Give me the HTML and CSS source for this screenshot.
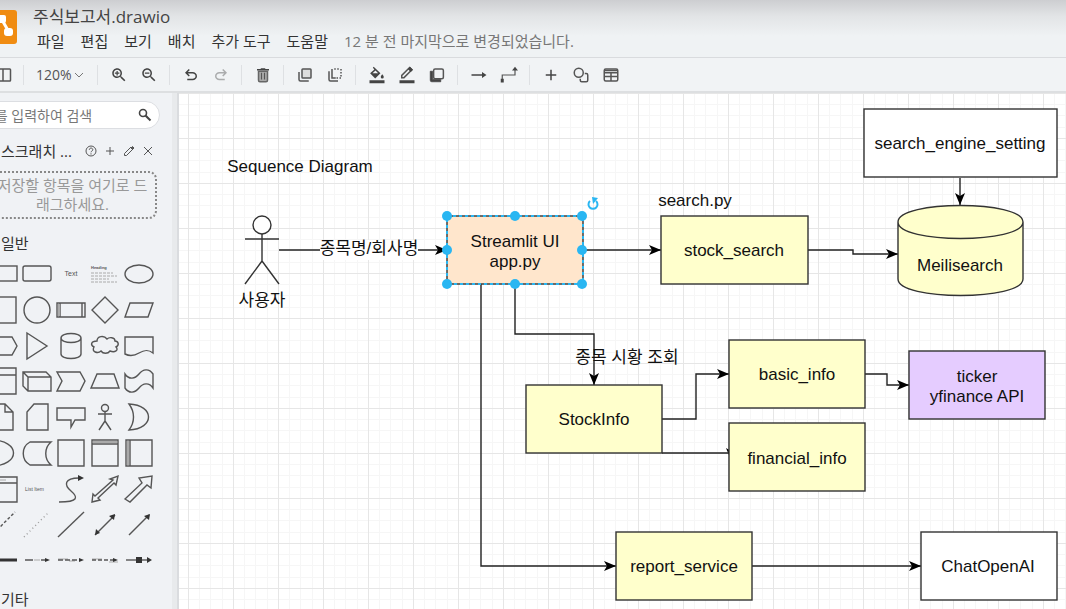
FILE: index.html
```html
<!DOCTYPE html>
<html lang="ko">
<head>
<meta charset="UTF-8">
<meta name="viewport" content="width=device-width, initial-scale=1.0">
<title>주식보고서.drawio</title>
<link rel="stylesheet" href="styles.css">
</head>
<body>
<div class="app">
  <header class="header">
    <a class="logo" href="#" aria-label="draw.io">
      <svg viewBox="0 0 34 34">
        <rect width="34" height="34" rx="3" fill="#f08c12"/>
        <path d="M17 10 L9 22 M19 10 L26 22" stroke="#fff" stroke-width="3"/>
        <rect x="11" y="5" width="12" height="8" rx="2" fill="#fff"/>
        <rect x="4" y="18" width="9" height="8" rx="2" fill="#fff"/>
        <rect x="21" y="18" width="9" height="8" rx="3" fill="#fff"/>
      </svg>
    </a>
    <div class="header-main">
      <h1 class="title">주식보고서.drawio</h1>
      <nav class="menu">
        <a href="#">파일</a>
        <a href="#">편집</a>
        <a href="#">보기</a>
        <a href="#">배치</a>
        <a href="#">추가 도구</a>
        <a href="#">도움말</a>
        <span class="status">12 분 전 마지막으로 변경되었습니다.</span>
      </nav>
    </div>
  </header>

  <div class="toolbar">
    <button aria-label="Sidebar"><svg viewBox="0 0 24 24"><g class="line"><rect x="4" y="4" width="18" height="16" rx="1"/><path d="M12 4v16"/></g></svg></button>
    <span class="sep"></span>
    <div class="zoom">
      <select aria-label="Zoom"><option>120%</option><option>100%</option></select>
      <svg viewBox="0 0 10 10"><path d="M1 3l4 4 4-4" fill="none" stroke="#777"/></svg>
    </div>
    <span class="sep"></span>
    <button aria-label="Zoom in"><svg viewBox="0 0 24 24"><path d="M15.500 14h-.79l-.28-.27C15.410 12.590 16 11.110 16 9.500 16 5.910 13.090 3 9.500 3S3 5.910 3 9.500 5.910 16 9.500 16c1.610 0 3.090-.59 4.230-1.570l.27.28v.79l5 4.990L20.490 19zM9.500 14C7.010 14 5 11.990 5 9.500S7.010 5 9.500 5 14 7.010 14 9.500 11.990 14 9.500 14zM6.500 8.700h2.200V6.500h1.600v2.200h2.200v1.600h-2.200v2.200H8.700v-2.200H6.500z"/></svg></button>
    <button aria-label="Zoom out"><svg viewBox="0 0 24 24"><path d="M15.500 14h-.79l-.28-.27C15.410 12.590 16 11.110 16 9.500 16 5.910 13.090 3 9.500 3S3 5.910 3 9.500 5.910 16 9.500 16c1.610 0 3.090-.59 4.230-1.570l.27.28v.79l5 4.990L20.490 19zM9.500 14C7.010 14 5 11.990 5 9.500S7.010 5 9.500 5 14 7.010 14 9.500 11.990 14 9.500 14zM6.500 8.700h6v1.600h-6z"/></svg></button>
    <span class="sep"></span>
    <button aria-label="Undo"><svg viewBox="0 0 24 24"><path d="M7 19v-2h7.100q1.575 0 2.737-1Q18 15 18 13.500T16.837 11Q15.675 10 14.100 10H7.800l2.600 2.600L9 14 4 9l5-5 1.400 1.400L7.800 8h6.300q2.425 0 4.163 1.575Q20 11.150 20 13.500t-1.737 3.925Q16.525 19 14.100 19z"/></svg></button>
    <button aria-label="Redo" disabled><svg viewBox="0 0 24 24"><path transform="matrix(-1 0 0 1 24 0)" d="M7 19v-2h7.100q1.575 0 2.737-1Q18 15 18 13.500T16.837 11Q15.675 10 14.100 10H7.800l2.600 2.600L9 14 4 9l5-5 1.400 1.400L7.800 8h6.300q2.425 0 4.163 1.575Q20 11.150 20 13.500t-1.737 3.925Q16.525 19 14.100 19z"/></svg></button>
    <span class="sep"></span>
    <button aria-label="Delete"><svg viewBox="0 0 24 24"><path d="M9 3h6v1h5v2H4V4h5z"/><path d="M6 7h12v12a2 2 0 0 1-2 2H8a2 2 0 0 1-2-2z" fill="#aaa" stroke="#666" stroke-width="2"/><path d="M10 9v9M14 9v9" stroke="#555" stroke-width="1.500"/></svg></button>
    <span class="sep"></span>
    <button aria-label="To front"><svg viewBox="0 0 24 24"><g class="line"><path d="M4 8v10a2 2 0 0 0 2 2h11"/><rect x="8" y="4" width="12" height="12" rx="1" fill="#ddd"/></g></svg></button>
    <button aria-label="To back"><svg viewBox="0 0 24 24"><g class="line"><path d="M4 7v11a2 2 0 0 0 2 2h10M8 4v12h5"/><path d="M11 4h8M20 4v12h-7" stroke-dasharray="2 2"/></g></svg></button>
    <span class="sep"></span>
    <button aria-label="Fill color"><svg viewBox="0 0 24 24"><path d="M7.600 1l9 8.700-7 6.800-6.800-6.800 5.700-5.200L6.500 2.300zM6 9.500h7.500L10 6z" fill-rule="evenodd"/><path d="M19 11s-2 2.200-2 3.500a2 2 0 0 0 4 0C21 13.200 19 11 19 11zM2 19h20v4H2z"/></svg></button>
    <button aria-label="Line color"><svg viewBox="0 0 24 24"><path d="M5 15.500v-3L15.500 2l3 3L8 15.500z" class="line"/><path d="M13 4l3-3 4 4-3 3zM2 19h20v4H2z"/></svg></button>
    <button aria-label="Shadow"><svg viewBox="0 0 24 24"><path d="M6 7v11h11v3H5a2 2 0 0 1-2-2V7z" stroke="#444"/><rect x="7.500" y="4" width="13" height="13" rx="2" class="line"/></svg></button>
    <span class="sep"></span>
    <button aria-label="Connection"><svg viewBox="0 0 24 24"><path d="M2 11h14V8l6 4-6 4v-3H2z"/></svg></button>
    <button aria-label="Waypoints"><svg viewBox="0 0 24 24"><path d="M3 19v-7h17V4" fill="none" stroke="#555" stroke-width="1.600"/><path d="M1 17h4v5H1zM16 6l4-5 4 5z"/></svg></button>
    <span class="sep"></span>
    <button aria-label="Insert"><svg viewBox="0 0 24 24"><path d="M11 5h2v6h6v2h-6v6h-2v-6H5v-2h6z"/></svg></button>
    <button aria-label="Shapes"><svg viewBox="0 0 24 24"><g class="line"><circle cx="9" cy="9" r="6"/><path d="M17 10h2a2 2 0 0 1 2 2v7a2 2 0 0 1-2 2h-6a2 2 0 0 1-2-2v-2"/></g></svg></button>
    <button aria-label="Table"><svg viewBox="0 0 24 24"><g class="line"><rect x="3" y="4" width="18" height="16" rx="2"/><path d="M3 9h18M3 14h18M12 9v11M4 6h16"/></g></svg></button>
  </div>

  <div class="workspace">
    <aside class="sidebar">
      <div class="search">
        <input type="text" aria-label="검색" placeholder="단어를 입력하여 검색">
        <button aria-label="검색"><svg viewBox="0 0 14 14"><circle cx="5" cy="5" r="3.500" fill="none" stroke="#444" stroke-width="1.600"/><path d="M7.500 7.500L12.500 12.500" stroke="#444" stroke-width="2"/></svg></button>
      </div>
      <div class="scratch-head">
        <h2>스크래치 ...</h2>
        <button aria-label="도움말"><svg viewBox="0 0 14 14"><circle cx="7" cy="7" r="5"/><path d="M5.300 5.800c0-2.300 3.500-2.300 3.500 0C8.800 7 7 7 7 8.300M7 9.300v1.200"/></svg></button>
        <button aria-label="추가"><svg viewBox="0 0 14 14"><path d="M7 3v8M3 7h8"/></svg></button>
        <button aria-label="편집"><svg viewBox="0 0 14 14"><path d="M2.500 11.500V9.500L9 3l2 2-6.500 6.500z"/><path d="M9 4l1.500-1.500 1.500 1.500L10.500 5.500z" fill="#555"/></svg></button>
        <button aria-label="닫기"><svg viewBox="0 0 14 14"><path d="M3 3l8 8M11 3l-8 8"/></svg></button>
      </div>
      <p class="dropzone">저장할 항목을 여기로 드래그하세요.</p>
      <h2 class="section">일반</h2>
      <div class="palette">
        <button aria-label="Rectangle"><svg viewBox="0 0 34 36"><rect x="3" y="11" width="28" height="15"/></svg></button>
        <button aria-label="Rounded rectangle"><svg viewBox="0 0 34 36"><rect x="3" y="11" width="28" height="15" rx="2"/></svg></button>
        <button aria-label="Text"><svg viewBox="0 0 34 36"><text x="17" y="21" text-anchor="middle" font-size="7">Text</text></svg></button>
        <button aria-label="Text box"><svg viewBox="0 0 34 36"><text x="3" y="14" class="bold" font-size="4">Heading</text><path class="soft" stroke-dasharray="3 1" d="M3 18h22M3 21h26M3 24h18M3 27h26"/></svg></button>
        <button aria-label="Ellipse"><svg viewBox="0 0 34 36"><ellipse cx="17" cy="19" rx="14" ry="9"/></svg></button>

        <button aria-label="Square"><svg viewBox="0 0 34 36"><rect x="4" y="6" width="26" height="26"/></svg></button>
        <button aria-label="Circle"><svg viewBox="0 0 34 36"><circle cx="17" cy="19" r="13"/></svg></button>
        <button aria-label="Process"><svg viewBox="0 0 34 36"><path d="M3 12h28v14H3zM6 12v14M28 12v14"/><path class="shade" d="M4 13h2v12H4z"/></svg></button>
        <button aria-label="Diamond"><svg viewBox="0 0 34 36"><path d="M17 6l13 13-13 13L4 19z"/></svg></button>
        <button aria-label="Parallelogram"><svg viewBox="0 0 34 36"><path d="M8 12h23l-5 14H3z"/></svg></button>

        <button aria-label="Hexagon"><svg viewBox="0 0 34 36"><path d="M8 10h18l5 9-5 9H8l-5-9z"/></svg></button>
        <button aria-label="Triangle"><svg viewBox="0 0 34 36"><path d="M7 6l20 13L7 32z"/></svg></button>
        <button aria-label="Cylinder"><svg viewBox="0 0 34 36"><path d="M7 11v16c0 6 20 6 20 0V11c0-6-20-6-20 0c0 6 20 6 20 0"/></svg></button>
        <button aria-label="Cloud"><svg viewBox="0 0 34 36"><path d="M9 14c-6 0-7 4-3 6-3 5 4 7 7 4 2 3 7 3 9 0 5 2 9-1 6-4 4-2 2-6-1-6 0-4-6-4-8-2-3-4-10-3-10 2z"/></svg></button>
        <button aria-label="Document"><svg viewBox="0 0 34 36"><path d="M3 10h28v16c-5-4-9-3-14 0s-10 3-14 1z"/></svg></button>

        <button aria-label="Internal storage"><svg viewBox="0 0 34 36"><path d="M4 5h26v26H4zM4 12h26"/></svg></button>
        <button aria-label="Cube"><svg viewBox="0 0 34 36"><path d="M3 9h23l5 5v14H8l-5-5zM3 9l5 5h23M8 14v14"/></svg></button>
        <button aria-label="Step"><svg viewBox="0 0 34 36"><path d="M3 9h23l5 9-5 10H3l5-10z"/></svg></button>
        <button aria-label="Trapezoid"><svg viewBox="0 0 34 36"><path d="M9 11h17l5 14H3z"/></svg></button>
        <button aria-label="Tape"><svg viewBox="0 0 34 36"><path d="M3 11c4 6 10 5 14 0 4-5 10-6 14 0v14c-4-6-10-5-14 0-4 5-10 6-14 0z"/></svg></button>

        <button aria-label="Note"><svg viewBox="0 0 34 36"><path d="M7 5h12l8 8v18H7zM19 5v8h8"/></svg></button>
        <button aria-label="Card"><svg viewBox="0 0 34 36"><path d="M14 5h14v26H7V13z"/></svg></button>
        <button aria-label="Callout"><svg viewBox="0 0 34 36"><path d="M3 9h28v12H21l-4 7v-7H3z"/></svg></button>
        <button aria-label="Actor"><svg viewBox="0 0 34 36"><circle cx="17" cy="9" r="3.500"/><path d="M17 12v10M10 15h14M17 22l-6 9M17 22l6 9"/></svg></button>
        <button aria-label="Or"><svg viewBox="0 0 34 36"><path d="M7 5c26 1 26 25 0 26 6-8 6-18 0-26z"/></svg></button>

        <button aria-label="And"><svg viewBox="0 0 34 36"><path d="M5 5c30 0 30 26 0 26z"/></svg></button>
        <button aria-label="Data storage"><svg viewBox="0 0 34 36"><path d="M10 7h21c-7 6-7 17 0 23H10C1 25 1 12 10 7z"/></svg></button>
        <button aria-label="Container"><svg viewBox="0 0 34 36"><path d="M4 5h26v26H4z"/></svg></button>
        <button aria-label="Vertical container"><svg viewBox="0 0 34 36"><path d="M4 5h26v26H4zM4 9h26"/><path class="shade" d="M5 6h24v2H5z"/></svg></button>
        <button aria-label="Horizontal container"><svg viewBox="0 0 34 36"><path d="M4 5h26v26H4zM8 5v26"/><path class="shade" d="M5 6h2v24H5z"/></svg></button>

        <button aria-label="List"><svg viewBox="0 0 34 36"><path d="M3 6h28v25H3zM3 12h28"/><path class="soft" d="M12 9h8"/></svg></button>
        <button aria-label="List item"><svg viewBox="0 0 34 36"><text x="5" y="20" font-size="5">List Item</text></svg></button>
        <button aria-label="Curve"><svg viewBox="0 0 34 36"><path d="M5 31c20 0 19-5 12-11s-7-13 8-13"/><path class="solid" d="M24 4l6 3-6 3z"/></svg></button>
        <button aria-label="Bidirectional arrow"><svg viewBox="0 0 34 36"><path d="M4 31l1-8 2 2L25 9l-3-1 8-3-2 9-2-2L10 27l2 2z"/></svg></button>
        <button aria-label="Arrow"><svg viewBox="0 0 34 36"><path d="M3 28l17-16-3-5 13-2-1 12-4-3L8 31z"/></svg></button>

        <button aria-label="Dashed line"><svg viewBox="0 0 34 36"><path stroke-dasharray="3 2" d="M4 30L29 5"/></svg></button>
        <button aria-label="Dotted line"><svg viewBox="0 0 34 36"><path class="dots" d="M4 30L29 5"/></svg></button>
        <button aria-label="Line"><svg viewBox="0 0 34 36"><path d="M4 30L30 5"/></svg></button>
        <button aria-label="Bidirectional connector"><svg viewBox="0 0 34 36"><path d="M7 28L27 8"/><path class="solid" d="M7 28l1-6 4 4zM27 7l-1 6-5-4z"/></svg></button>
        <button aria-label="Directional connector"><svg viewBox="0 0 34 36"><path d="M7 28L27 8"/><path class="solid" d="M28 7l-1 6-5-4z"/></svg></button>

        <button aria-label="Link"><svg viewBox="0 0 34 36"><path class="thick" d="M4 17h27"/></svg></button>
        <button aria-label="Connector with label"><svg viewBox="0 0 34 36"><path d="M5 17h8M21 17h5"/><path class="soft" d="M14 17h6"/><path class="solid" d="M25 15l5 2-5 2z"/></svg></button>
        <button aria-label="Connector with 2 labels"><svg viewBox="0 0 34 36"><path class="soft" d="M4 16h10M15 18h6"/><path d="M4 17h23"  stroke-dasharray="5 2"/><path class="solid" d="M25 15l5 2-5 2z"/></svg></button>
        <button aria-label="Connector with 3 labels"><svg viewBox="0 0 34 36"><path class="soft" d="M4 16h10M21 19h9"/><path d="M4 17h23" stroke-dasharray="4 2"/><path class="solid" d="M25 15l5 2-5 2z"/></svg></button>
        <button aria-label="Connector with symbol"><svg viewBox="0 0 34 36"><path d="M4 17h23"/><path class="solid" d="M14 14h6v6h-6zM25 14l5 3-5 3z"/></svg></button>
      </div>
      <h2 class="section">기타</h2>
    </aside>

    <main class="canvas">
      <svg class="diagram">
        <defs>
          <pattern id="grid" x="188" y="138" width="45" height="45" patternUnits="userSpaceOnUse">
            <path class="minor" d="M11.500 0v45M22.500 0v45M34.500 0v45M0 11.500h45M0 22.500h45M0 34.500h45"/>
            <path class="major" d="M.5 0v45M0 .5h45"/>
          </pattern>
          <marker id="arrow" viewBox="0 0 12 10" refX="12" refY="5" markerWidth="12" markerHeight="10" markerUnits="userSpaceOnUse" orient="auto">
            <path d="M12 5L0 0l3 5-3 5z"/>
          </marker>
        </defs>
        <!-- scrolled view of the page -->
        <g transform="translate(-179 -93)">
          <rect class="page" x="179" y="93" width="100%" height="100%"/>

          <g class="edges">
            <path d="M279 250H447"/>
            <path d="M583 250H661"/>
            <path d="M808 250H853V254H898"/>
            <path d="M960 178V205"/>
            <path d="M481 284V566H616"/>
            <path d="M515 284V334H594V385"/>
            <path d="M662 419H696V374H729"/>
            <path d="M662 453H731V460"/>
            <path d="M865 374H887V385H909"/>
            <path d="M752 566H921"/>
          </g>

          <g class="actor">
            <circle cx="262" cy="225" r="9"/>
            <path d="M262 234V261M245 239H279M262 261L245 284M262 261L279 284"/>
          </g>

          <g class="nodes">
            <rect class="orange" x="447" y="216" width="136" height="68"/>
            <rect class="yellow" x="661" y="216" width="147" height="68"/>
            <rect class="white" x="864" y="109" width="193" height="68"/>
            <path class="yellow" d="M898 222V279C898 301 1023 301 1023 279V222C1023 200 898 200 898 222C898 244 1023 244 1023 222"/>
            <rect class="yellow" x="526" y="385" width="136" height="68"/>
            <rect class="yellow" x="729" y="340" width="136" height="68"/>
            <rect class="yellow" x="729" y="423" width="136" height="68"/>
            <rect class="purple" x="909" y="351" width="136" height="68"/>
            <rect class="yellow" x="616" y="532" width="136" height="68"/>
            <rect class="white" x="921" y="532" width="136" height="68"/>
          </g>

          <rect class="label-bg" x="320" y="240" width="98" height="20"/>
          <g class="labels">
            <text x="300" y="172">Sequence Diagram</text>
            <text x="262" y="306">사용자</text>
            <text x="369" y="254">종목명/회사명</text>
            <text x="515" y="247">Streamlit UI</text>
            <text x="515" y="267">app.py</text>
            <text x="695" y="206">search.py</text>
            <text x="734" y="256">stock_search</text>
            <text x="960" y="149">search_engine_setting</text>
            <text x="960" y="271">Meilisearch</text>
            <text x="627" y="363">종목 시황 조회</text>
            <text x="594" y="425">StockInfo</text>
            <text x="797" y="380">basic_info</text>
            <text x="797" y="464">financial_info</text>
            <text x="977" y="382">ticker</text>
            <text x="977" y="402">yfinance API</text>
            <text x="684" y="572">report_service</text>
            <text x="988" y="572">ChatOpenAI</text>
          </g>

          <g class="selection">
            <rect x="447" y="216" width="136" height="68"/>
            <circle cx="447" cy="216" r="5"/>
            <circle cx="515" cy="216" r="5"/>
            <circle cx="582" cy="216" r="5"/>
            <circle cx="447" cy="250" r="5"/>
            <circle cx="582" cy="250" r="5"/>
            <circle cx="447" cy="284" r="5"/>
            <circle cx="515" cy="284" r="5"/>
            <circle cx="582" cy="284" r="5"/>
            <path class="rotate" d="M590 201a4.500 4.500 0 1 0 6 0"/>
            <path class="rotate-tip" d="M592 197l6 1-5 6z"/>
          </g>
        </g>
      </svg>
    </main>
  </div>
</div>
</body>
</html>
```

FILE: styles.css
```css
:root {
  --bg: #f0f2f5;
  --line: #d9dbde;
  --text: #333;
  --icon: #444;
  --select: #29b6f2;
}

* {
  margin: 0;
  padding: 0;
  box-sizing: border-box;
}

body {
  font-family: "Open Sans", "Noto Sans CJK KR", sans-serif;
  font-size: 15px;
  color: var(--text);
  background: var(--bg);
  overflow: hidden;
}

button {
  border: none;
  background: none;
  display: flex;
  align-items: center;
  justify-content: center;
}

/* the window is scrolled a little to the right */
.app {
  margin-left: -48px;
  height: 100vh;
  display: flex;
  flex-direction: column;
}

.header {
  display: flex;
  gap: 16px;
  padding: 5px 31px 4px;
  background: linear-gradient(#cdced1, #e2e4e6 16px, #eff2f4 36px);
  border-bottom: 1px solid var(--line);
}

.logo {
  width: 34px;
  height: 34px;
  margin-top: 5px;
}

.logo svg {
  display: block;
}

.title {
  font-size: 17px;
  font-weight: 400;
  line-height: 24px;
  color: #444;
}

.menu {
  display: flex;
  gap: 16px;
  padding-left: 4px;
  line-height: 24px;
  white-space: nowrap;
}

.menu a {
  color: #333;
  text-decoration: none;
}

.status {
  color: #777;
}

.toolbar {
  display: flex;
  align-items: center;
  height: 35px;
  padding-left: 36px;
  background: #f1f3f5;
  border-bottom: 2px solid #dddfe1;
}

.toolbar button {
  width: 30px;
  height: 30px;
}

.toolbar button svg {
  width: 18px;
  height: 18px;
  fill: var(--icon);
}

.toolbar button:disabled {
  opacity: 0.4;
}

.toolbar .line {
  fill: none;
  stroke: #555;
  stroke-width: 2;
}

.sep {
  width: 1px;
  height: 20px;
  margin: 0 6px 0 5px;
  background: #dee0e3;
}

.zoom {
  display: flex;
  align-items: center;
  width: 62px;
  padding-left: 6px;
}

.zoom select {
  appearance: none;
  width: 38px;
  border: none;
  background: none;
  font: 14px "Open Sans", sans-serif;
  color: #555;
}

.zoom svg {
  width: 10px;
  height: 10px;
}

.workspace {
  flex: 1;
  display: flex;
  min-height: 0;
}

.sidebar {
  width: 227px;
  padding-top: 8px;
  border-right: 2px solid #dadcdf;
  box-shadow: inset -5px 0 #e8eaec;
  overflow: hidden;
}

.search {
  display: flex;
  align-items: center;
  height: 28px;
  margin: 0 17px 0 4px;
  padding: 0 7px 0 12px;
  background: #fff;
  border: 1px solid #dcdee2;
  border-radius: 14px;
}

.search input {
  flex: 1;
  min-width: 0;
  border: none;
  outline: none;
  font: 14px "Open Sans", "Noto Sans CJK KR", sans-serif;
}

.search input::placeholder {
  color: #777;
}

.search button svg {
  width: 14px;
  height: 14px;
}

h2 {
  font-size: 15px;
  font-weight: 400;
  line-height: 24px;
}

.scratch-head {
  display: flex;
  align-items: center;
  margin-top: 10px;
  padding: 0 20px 0 49px;
}

.scratch-head h2 {
  flex: 1;
  white-space: nowrap;
}

.scratch-head button {
  width: 19px;
  height: 19px;
}

.scratch-head svg {
  width: 14px;
  height: 14px;
  fill: none;
  stroke: #555;
}

.dropzone {
  margin: 8px 20px 0 36px;
  padding: 3px;
  border: 2px dotted #888;
  border-radius: 8px;
  color: #999;
  line-height: 19px;
  text-align: center;
  word-break: break-all;
}

.section {
  padding: 0 49px;
}

.dropzone + .section {
  margin-top: 12px;
}

.palette {
  display: grid;
  grid-template-columns: repeat(5, 34px);
  grid-auto-rows: 36px;
  padding-left: 34px;
  margin-bottom: 8px;
}

.palette svg {
  width: 34px;
  height: 36px;
  fill: none;
  stroke: #555;
  stroke-width: 1.4;
}

.palette text {
  fill: #555;
  stroke: none;
  font-family: "Liberation Sans", sans-serif;
}

.palette .bold {
  font-weight: 700;
}

.palette .soft {
  stroke: #aaa;
  stroke-width: 1;
}

.palette .dots {
  stroke: #999;
  stroke-dasharray: 1 3;
}

.palette .shade {
  fill: #aaa;
  stroke: none;
}

.palette .solid {
  fill: #333;
  stroke: none;
}

.palette .thick {
  stroke: #333;
  stroke-width: 3;
}

.canvas {
  flex: 1;
  min-width: 0;
  background: #fff;
}

.diagram {
  display: block;
  width: 100%;
  height: 100%;
}

.page {
  fill: url(#grid);
}

.minor {
  stroke: #f6f6f6;
}

.major {
  stroke: #e6e6e6;
}

.edges path {
  fill: none;
  stroke: #222;
  stroke-width: 1.4;
  marker-end: url(#arrow);
}

.actor {
  fill: #fff;
  stroke: #333;
  stroke-width: 1.4;
}

.actor path {
  fill: none;
}

.nodes {
  stroke: #333;
  stroke-width: 1.4;
}

.yellow {
  fill: #ffffcc;
}

.orange {
  fill: #ffe6cc;
}

.purple {
  fill: #e5ccff;
}

.white,
.label-bg {
  fill: #fff;
}

.labels text {
  font: 17px "Liberation Sans", "Noto Sans CJK KR", sans-serif;
  fill: #111;
  text-anchor: middle;
}

.selection rect {
  fill: none;
  stroke: var(--select);
  stroke-width: 2;
  stroke-dasharray: 3 3;
}

.selection circle,
.rotate-tip {
  fill: var(--select);
}

.rotate {
  fill: none;
  stroke: var(--select);
  stroke-width: 2;
}
```
